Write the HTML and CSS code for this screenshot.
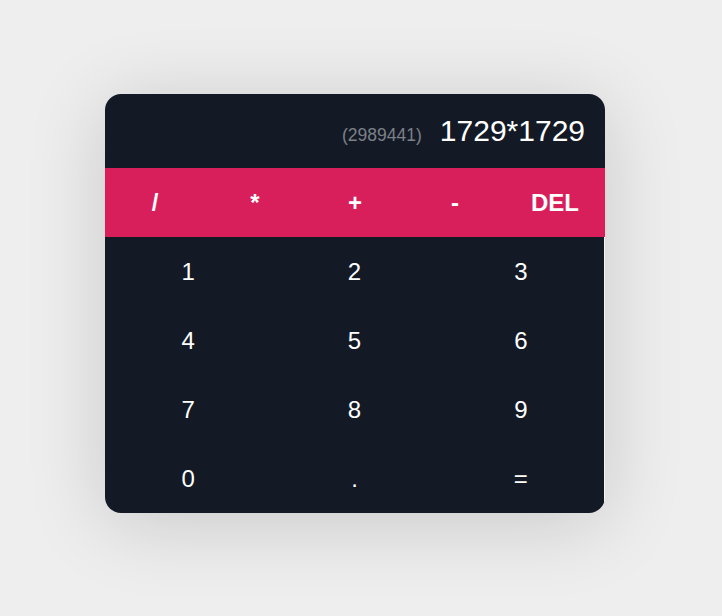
FILE: index.html
```html
<!DOCTYPE html>
<html>
<head>
<meta charset="utf-8">
<link rel="stylesheet" href="styles.css">
</head>
<body>
<div class="page">
  <div class="calc">
    <div class="display">
      <span class="result">(2989441)</span>
      <span class="expr">1729*1729</span>
    </div>
    <div class="ops">
      <button class="op">/</button>
      <button class="op">*</button>
      <button class="op">+</button>
      <button class="op">-</button>
      <button class="op">DEL</button>
    </div>
    <div class="digits">
      <button class="key">1</button>
      <button class="key">2</button>
      <button class="key">3</button>
      <button class="key">4</button>
      <button class="key">5</button>
      <button class="key">6</button>
      <button class="key">7</button>
      <button class="key">8</button>
      <button class="key">9</button>
      <button class="key">0</button>
      <button class="key">.</button>
      <button class="key">=</button>
    </div>
  </div>
</div>
</body>
</html>
```
FILE: styles.css
```css
html, body {
  margin: 0;
  padding: 0;
  background: #eeeeee;
  font-family: "Liberation Sans", Arial, sans-serif;
}
.page {
  display: flex;
  align-items: flex-start;
  padding: 94px 0 0 105px;
  height: 616px;
  box-sizing: border-box;
}
.calc {
  width: 500px;
  background: #f4f4f4;
  border-radius: 16px;
  overflow: hidden;
  box-shadow: 0 10px 80px rgba(0, 0, 0, 0.16);
}
.display {
  height: 74px;
  display: flex;
  align-items: center;
  justify-content: flex-end;
  gap: 18px;
  padding: 0 20px 0 0;
  box-sizing: border-box;
  background: #131a26;
}
.result {
  color: #7d8087;
  font-size: 17.5px;
  margin-top: 8px;
}
.expr {
  color: #ffffff;
  font-size: 30px;
}
.ops {
  display: grid;
  grid-template-columns: repeat(5, 1fr);
  background: #d81f5b;
  height: 69px;
}
.op, .key {
  border: none;
  background: transparent;
  color: #ffffff;
  font-family: "Liberation Sans", Arial, sans-serif;
  padding: 0;
  margin: 0;
  height: 69px;
}
.op {
  font-size: 24px;
  font-weight: bold;
}
.digits {
  display: grid;
  grid-template-columns: repeat(3, 1fr);
  width: 499px;
  background: #131a26;
}
.key {
  font-size: 24px;
}
```
